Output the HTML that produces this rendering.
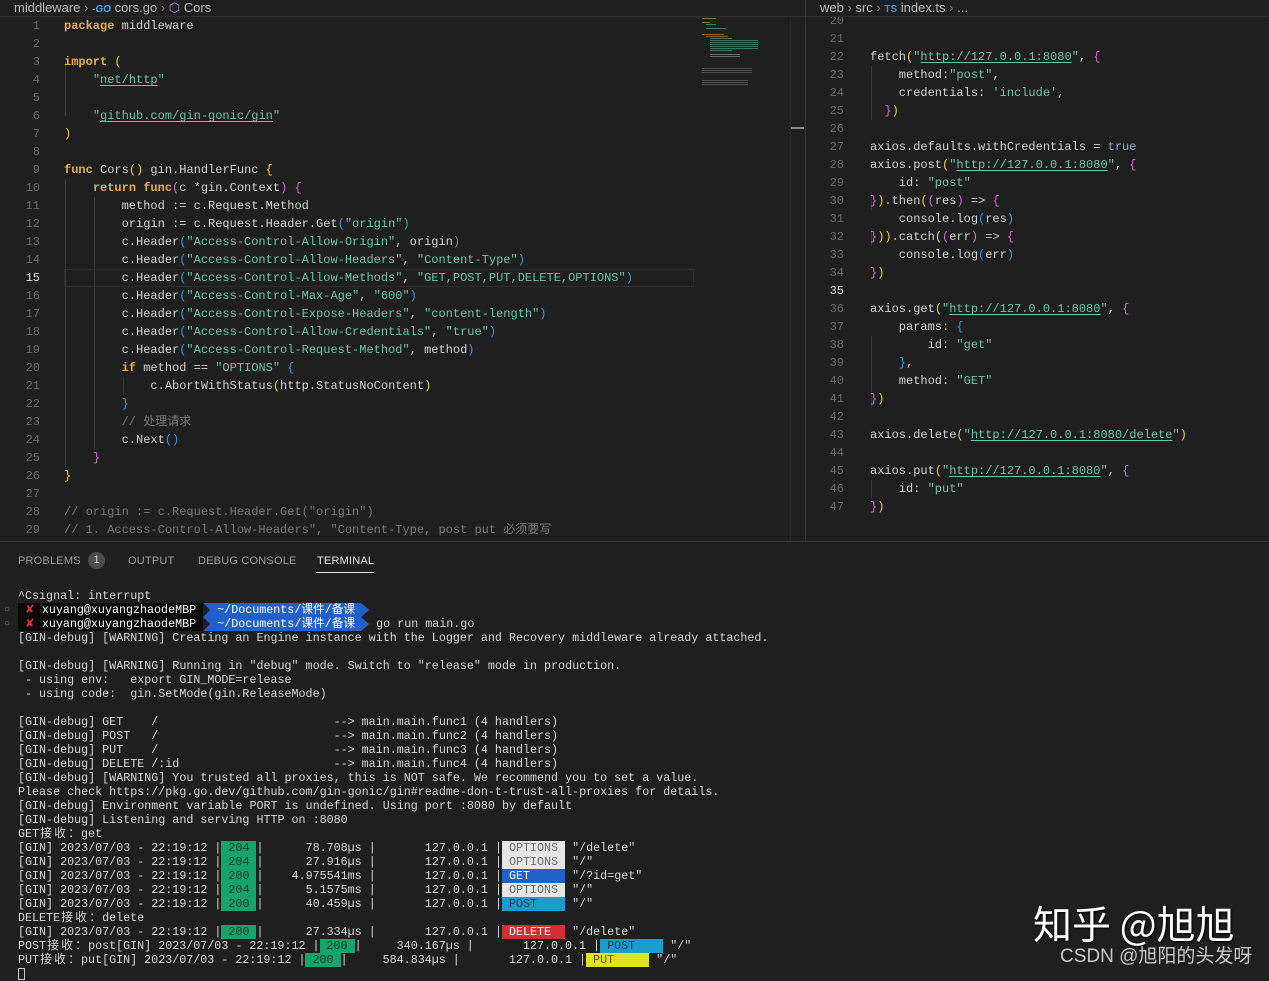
<!DOCTYPE html>
<html><head><meta charset="utf-8">
<style>
*{margin:0;padding:0;box-sizing:border-box}
body{width:1269px;height:977px;background:#1f1f1f;overflow:hidden;position:relative;font-family:"Liberation Mono","Noto Sans CJK SC",monospace;color:#d4d4d4}
.bc{position:absolute;top:0;height:15px;font:13px "Liberation Sans","Noto Sans CJK SC",sans-serif;color:#bbb;line-height:15px;white-space:nowrap}
.ln{position:absolute;font-size:12px;line-height:18px;height:18px;white-space:pre;text-align:right;color:#6b6b6b;width:40px}
.cl{position:absolute;font-size:12px;line-height:18px;height:18px;white-space:pre}
.k{color:#e8ab4c;font-weight:bold}
.s{color:#6cc5a8}
.u{text-decoration:underline;text-underline-offset:2px}
.y{color:#f2d03a}.p{color:#d070d0}.b{color:#3a9ad9}
.c{color:#7a7a7a}.t{color:#a0a0e0}
.g{position:absolute;width:1px;background:#3a3a3a}
#term{position:absolute;left:18px;top:589px;font-size:11.7px;line-height:14px;white-space:pre;color:#d8d8d8}
.w{display:inline-block;width:14px;text-align:center}
.s2{background:#17a36c;color:#0a3a25}
.op{background:#e6e6e6;color:#6a6a6a}
.ge{background:#2160c8;color:#fff}
.po{background:#1a9ccc;color:#0c3c55}
.de{background:#d22f35;color:#fff}
.pu{background:#e2e21e;color:#555}
.pk{background:#0a0a0a;color:#fff}
.pr{background:#2160c8;color:#fff;display:inline-block;clip-path:polygon(0 0,calc(100% - 8px) 0,100% 50%,calc(100% - 8px) 100%,0 100%,7px 50%)}
.tab{position:absolute;top:555px;font:11px "Liberation Sans",sans-serif;color:#9d9d9d;letter-spacing:.2px}
</style></head><body>

<!-- breadcrumbs -->
<div class="bc" style="left:14px">middleware <span style="color:#888">›</span> <span style="color:#5aa0d8;font-size:10px;font-style:italic;font-weight:bold">-GO</span> cors.go <span style="color:#888">›</span> <span style="color:#b180d7">⬡</span> Cors</div>
<div class="bc" style="left:820px">web <span style="color:#888">›</span> src <span style="color:#888">›</span> <span style="color:#3a8fd8;font-size:10px;font-weight:bold">TS</span> index.ts <span style="color:#888">›</span> ...</div>
<div style="position:absolute;left:0;top:16px;width:1269px;height:1px;background:#2c2c2c"></div>
<div style="position:absolute;left:805px;top:0;width:1px;height:541px;background:#333"></div>
<div style="position:absolute;left:0;top:541px;width:1269px;height:1px;background:#3a3a3a"></div>
<div style="position:absolute;left:790px;top:127px;width:14px;height:2px;background:#888"></div>
<div style="position:absolute;left:790px;top:16px;width:1px;height:525px;background:#2a2a2a"></div>

<!-- minimap -->
<div style="position:absolute;left:702px;top:18px;width:70px;height:80px;opacity:.55">
<div style="position:absolute;top:0;left:0;width:14px;height:1px;background:#e8ab4c"></div>
<div style="position:absolute;top:4px;left:0;width:8px;height:1px;background:#e8ab4c"></div>
<div style="position:absolute;top:6px;left:4px;width:10px;height:1px;background:#6cc5a8"></div>
<div style="position:absolute;top:10px;left:4px;width:20px;height:1px;background:#6cc5a8"></div>
<div style="position:absolute;top:16px;left:0;width:22px;height:1px;background:#e8ab4c"></div>
<div style="position:absolute;top:18px;left:4px;width:22px;height:1px;background:#d4a050"></div>
<div style="position:absolute;top:20px;left:8px;width:22px;height:14px;background:repeating-linear-gradient(#5fb89a 0 1px,transparent 1px 2px)"></div>
<div style="position:absolute;top:22px;left:20px;width:36px;height:10px;background:repeating-linear-gradient(#5fb89a 0 1px,transparent 1px 2px)"></div>
<div style="position:absolute;top:36px;left:8px;width:30px;height:4px;background:repeating-linear-gradient(#aaa 0 1px,transparent 1px 2px)"></div>
<div style="position:absolute;top:50px;left:0;width:50px;height:6px;background:repeating-linear-gradient(#777 0 1px,transparent 1px 2px)"></div>
<div style="position:absolute;top:62px;left:0;width:46px;height:6px;background:repeating-linear-gradient(#777 0 1px,transparent 1px 2px)"></div>
</div>

<!-- left editor -->
<div class="g" style="left:65px;top:62px;height:54px"></div>
<div class="g" style="left:65px;top:179px;height:288px"></div>
<div class="g" style="left:94px;top:197px;height:252px"></div>
<div class="g" style="left:123px;top:377px;height:18px"></div>
<div style="position:absolute;left:64px;top:269px;width:630px;height:18px;border:1px solid #2e2e2e"></div>

<div class="ln" style="left:0;top:17px">1</div><div class="cl" style="left:64px;top:17px"><span class="k">package</span> middleware</div>
<div class="ln" style="left:0;top:35px">2</div>
<div class="ln" style="left:0;top:53px">3</div><div class="cl" style="left:64px;top:53px"><span class="k">import</span> <span class="y">(</span></div>
<div class="ln" style="left:0;top:71px">4</div><div class="cl" style="left:64px;top:71px">    <span class="s">"<span class="u">net/http</span>"</span></div>
<div class="ln" style="left:0;top:89px">5</div>
<div class="ln" style="left:0;top:107px">6</div><div class="cl" style="left:64px;top:107px">    <span class="s">"<span class="u">github.com/gin-gonic/gin</span>"</span></div>
<div class="ln" style="left:0;top:125px">7</div><div class="cl" style="left:64px;top:125px"><span class="y">)</span></div>
<div class="ln" style="left:0;top:143px">8</div>
<div class="ln" style="left:0;top:161px">9</div><div class="cl" style="left:64px;top:161px"><span class="k">func</span> Cors<span class="y">()</span> gin.HandlerFunc <span class="y">{</span></div>
<div class="ln" style="left:0;top:179px">10</div><div class="cl" style="left:64px;top:179px">    <span class="k">return</span> <span class="k">func</span><span class="p">(</span>c *gin.Context<span class="p">)</span> <span class="p">{</span></div>
<div class="ln" style="left:0;top:197px">11</div><div class="cl" style="left:64px;top:197px">        method := c.Request.Method</div>
<div class="ln" style="left:0;top:215px">12</div><div class="cl" style="left:64px;top:215px">        origin := c.Request.Header.Get<span class="b">(</span><span class="s">"origin"</span><span class="b">)</span></div>
<div class="ln" style="left:0;top:233px">13</div><div class="cl" style="left:64px;top:233px">        c.Header<span class="b">(</span><span class="s">"Access-Control-Allow-Origin"</span>, origin<span class="b">)</span></div>
<div class="ln" style="left:0;top:251px">14</div><div class="cl" style="left:64px;top:251px">        c.Header<span class="b">(</span><span class="s">"Access-Control-Allow-Headers"</span>, <span class="s">"Content-Type"</span><span class="b">)</span></div>
<div class="ln" style="left:0;top:269px;color:#e0e0e0">15</div><div class="cl" style="left:64px;top:269px">        c.Header<span class="b">(</span><span class="s">"Access-Control-Allow-Methods"</span>, <span class="s">"GET,POST,PUT,DELETE,OPTIONS"</span><span class="b">)</span></div>
<div class="ln" style="left:0;top:287px">16</div><div class="cl" style="left:64px;top:287px">        c.Header<span class="b">(</span><span class="s">"Access-Control-Max-Age"</span>, <span class="s">"600"</span><span class="b">)</span></div>
<div class="ln" style="left:0;top:305px">17</div><div class="cl" style="left:64px;top:305px">        c.Header<span class="b">(</span><span class="s">"Access-Control-Expose-Headers"</span>, <span class="s">"content-length"</span><span class="b">)</span></div>
<div class="ln" style="left:0;top:323px">18</div><div class="cl" style="left:64px;top:323px">        c.Header<span class="b">(</span><span class="s">"Access-Control-Allow-Credentials"</span>, <span class="s">"true"</span><span class="b">)</span></div>
<div class="ln" style="left:0;top:341px">19</div><div class="cl" style="left:64px;top:341px">        c.Header<span class="b">(</span><span class="s">"Access-Control-Request-Method"</span>, method<span class="b">)</span></div>
<div class="ln" style="left:0;top:359px">20</div><div class="cl" style="left:64px;top:359px">        <span class="k">if</span> method == <span class="s">"OPTIONS"</span> <span class="b">{</span></div>
<div class="ln" style="left:0;top:377px">21</div><div class="cl" style="left:64px;top:377px">            c.AbortWithStatus<span class="y">(</span>http.StatusNoContent<span class="y">)</span></div>
<div class="ln" style="left:0;top:395px">22</div><div class="cl" style="left:64px;top:395px">        <span class="b">}</span></div>
<div class="ln" style="left:0;top:413px">23</div><div class="cl" style="left:64px;top:413px">        <span class="c">// 处理请求</span></div>
<div class="ln" style="left:0;top:431px">24</div><div class="cl" style="left:64px;top:431px">        c.Next<span class="b">()</span></div>
<div class="ln" style="left:0;top:449px">25</div><div class="cl" style="left:64px;top:449px">    <span class="p">}</span></div>
<div class="ln" style="left:0;top:467px">26</div><div class="cl" style="left:64px;top:467px"><span class="y">}</span></div>
<div class="ln" style="left:0;top:485px">27</div>
<div class="ln" style="left:0;top:503px">28</div><div class="cl c" style="left:64px;top:503px">// origin := c.Request.Header.Get("origin")</div>
<div class="ln" style="left:0;top:521px">29</div><div class="cl c" style="left:64px;top:521px">// 1. Access-Control-Allow-Headers", "Content-Type, post put 必须要写</div>

<!-- right editor -->
<div style="position:absolute;left:806px;top:17px;width:463px;height:524px;overflow:hidden">
<div class="g" style="left:65px;top:49px;height:54px"></div>
<div class="g" style="left:65px;top:175px;height:18px"></div>
<div class="g" style="left:65px;top:211px;height:18px"></div>
<div class="g" style="left:65px;top:319px;height:72px"></div>
<div class="g" style="left:65px;top:463px;height:18px"></div>
<div class="ln" style="left:-2px;top:-5px">20</div>
<div class="ln" style="left:-2px;top:13px">21</div>
<div class="ln" style="left:-2px;top:31px">22</div><div class="cl" style="left:64px;top:31px">fetch<span class="y">(</span><span class="s">"<span class="u">http://127.0.0.1:8080</span>"</span>, <span class="p">{</span></div>
<div class="ln" style="left:-2px;top:49px">23</div><div class="cl" style="left:64px;top:49px">    method:<span class="s">"post"</span>,</div>
<div class="ln" style="left:-2px;top:67px">24</div><div class="cl" style="left:64px;top:67px">    credentials: <span class="s">'include'</span>,</div>
<div class="ln" style="left:-2px;top:85px">25</div><div class="cl" style="left:64px;top:85px">  <span class="p">}</span><span class="y">)</span></div>
<div class="ln" style="left:-2px;top:103px">26</div>
<div class="ln" style="left:-2px;top:121px">27</div><div class="cl" style="left:64px;top:121px">axios.defaults.withCredentials = <span class="t">true</span></div>
<div class="ln" style="left:-2px;top:139px">28</div><div class="cl" style="left:64px;top:139px">axios.post<span class="y">(</span><span class="s">"<span class="u">http://127.0.0.1:8080</span>"</span>, <span class="p">{</span></div>
<div class="ln" style="left:-2px;top:157px">29</div><div class="cl" style="left:64px;top:157px">    id: <span class="s">"post"</span></div>
<div class="ln" style="left:-2px;top:175px">30</div><div class="cl" style="left:64px;top:175px"><span class="p">}</span><span class="y">)</span>.then<span class="y">(</span><span class="p">(</span>res<span class="p">)</span> =&gt; <span class="p">{</span></div>
<div class="ln" style="left:-2px;top:193px">31</div><div class="cl" style="left:64px;top:193px">    console.log<span class="b">(</span>res<span class="b">)</span></div>
<div class="ln" style="left:-2px;top:211px">32</div><div class="cl" style="left:64px;top:211px"><span class="p">}</span><span class="y">))</span>.catch<span class="y">(</span><span class="p">(</span>err<span class="p">)</span> =&gt; <span class="p">{</span></div>
<div class="ln" style="left:-2px;top:229px">33</div><div class="cl" style="left:64px;top:229px">    console.log<span class="b">(</span>err<span class="b">)</span></div>
<div class="ln" style="left:-2px;top:247px">34</div><div class="cl" style="left:64px;top:247px"><span class="p">}</span><span class="y">)</span></div>
<div class="ln" style="left:-2px;top:265px;color:#e0e0e0">35</div>
<div class="ln" style="left:-2px;top:283px">36</div><div class="cl" style="left:64px;top:283px">axios.get<span class="y">(</span><span class="s">"<span class="u">http://127.0.0.1:8080</span>"</span>, <span class="p">{</span></div>
<div class="ln" style="left:-2px;top:301px">37</div><div class="cl" style="left:64px;top:301px">    params: <span class="b">{</span></div>
<div class="ln" style="left:-2px;top:319px">38</div><div class="cl" style="left:64px;top:319px">        id: <span class="s">"get"</span></div>
<div class="ln" style="left:-2px;top:337px">39</div><div class="cl" style="left:64px;top:337px">    <span class="b">}</span>,</div>
<div class="ln" style="left:-2px;top:355px">40</div><div class="cl" style="left:64px;top:355px">    method: <span class="s">"GET"</span></div>
<div class="ln" style="left:-2px;top:373px">41</div><div class="cl" style="left:64px;top:373px"><span class="p">}</span><span class="y">)</span></div>
<div class="ln" style="left:-2px;top:391px">42</div>
<div class="ln" style="left:-2px;top:409px">43</div><div class="cl" style="left:64px;top:409px">axios.delete<span class="y">(</span><span class="s">"<span class="u">http://127.0.0.1:8080/delete</span>"</span><span class="y">)</span></div>
<div class="ln" style="left:-2px;top:427px">44</div>
<div class="ln" style="left:-2px;top:445px">45</div><div class="cl" style="left:64px;top:445px">axios.put<span class="y">(</span><span class="s">"<span class="u">http://127.0.0.1:8080</span>"</span>, <span class="p">{</span></div>
<div class="ln" style="left:-2px;top:463px">46</div><div class="cl" style="left:64px;top:463px">    id: <span class="s">"put"</span></div>
<div class="ln" style="left:-2px;top:481px">47</div><div class="cl" style="left:64px;top:481px"><span class="p">}</span><span class="y">)</span></div>
</div>

<!-- panel tabs -->
<div class="tab" style="left:18px">PROBLEMS</div>
<div style="position:absolute;left:88px;top:552px;width:17px;height:17px;border-radius:50%;background:#4d4d4d;color:#ddd;font:11px 'Liberation Sans',sans-serif;text-align:center;line-height:17px">1</div>
<div class="tab" style="left:128px">OUTPUT</div>
<div class="tab" style="left:198px">DEBUG CONSOLE</div>
<div class="tab" style="left:317px;color:#e7e7e7">TERMINAL</div>
<div style="position:absolute;left:316px;top:572px;width:58px;height:1px;background:#e7e7e7"></div>

<div style="position:absolute;left:4px;top:604px;font-size:10px;color:#888;line-height:14px">○<br>○</div>

<div id="term">^Csignal: interrupt
<span class="pk"> <span style="color:#e03030">✘</span> xuyang@xuyangzhaodeMBP </span><span class="pr">  ~/Documents/课件/备课  </span>
<span class="pk"> <span style="color:#e03030">✘</span> xuyang@xuyangzhaodeMBP </span><span class="pr">  ~/Documents/课件/备课  </span> go run main.go
[GIN-debug] [WARNING] Creating an Engine instance with the Logger and Recovery middleware already attached.

[GIN-debug] [WARNING] Running in "debug" mode. Switch to "release" mode in production.
 - using env:   export GIN_MODE=release
 - using code:  gin.SetMode(gin.ReleaseMode)

[GIN-debug] GET    /                         --&gt; main.main.func1 (4 handlers)
[GIN-debug] POST   /                         --&gt; main.main.func2 (4 handlers)
[GIN-debug] PUT    /                         --&gt; main.main.func3 (4 handlers)
[GIN-debug] DELETE /:id                      --&gt; main.main.func4 (4 handlers)
[GIN-debug] [WARNING] You trusted all proxies, this is NOT safe. We recommend you to set a value.
Please check https://pkg.go.dev/github.com/gin-gonic/gin#readme-don-t-trust-all-proxies for details.
[GIN-debug] Environment variable PORT is undefined. Using port :8080 by default
[GIN-debug] Listening and serving HTTP on :8080
GET<span class="w">接</span><span class="w">收</span><span class="w">：</span>get
[GIN] 2023/07/03 - 22:19:12 |<span class="s2"> 204 </span>|      78.708µs |       127.0.0.1 |<span class="op"> OPTIONS </span> "/delete"
[GIN] 2023/07/03 - 22:19:12 |<span class="s2"> 204 </span>|      27.916µs |       127.0.0.1 |<span class="op"> OPTIONS </span> "/"
[GIN] 2023/07/03 - 22:19:12 |<span class="s2"> 200 </span>|    4.975541ms |       127.0.0.1 |<span class="ge"> GET     </span> "/?id=get"
[GIN] 2023/07/03 - 22:19:12 |<span class="s2"> 204 </span>|      5.1575ms |       127.0.0.1 |<span class="op"> OPTIONS </span> "/"
[GIN] 2023/07/03 - 22:19:12 |<span class="s2"> 200 </span>|      40.459µs |       127.0.0.1 |<span class="po"> POST    </span> "/"
DELETE<span class="w">接</span><span class="w">收</span><span class="w">：</span>delete
[GIN] 2023/07/03 - 22:19:12 |<span class="s2"> 200 </span>|      27.334µs |       127.0.0.1 |<span class="de"> DELETE  </span> "/delete"
POST<span class="w">接</span><span class="w">收</span><span class="w">：</span>post[GIN] 2023/07/03 - 22:19:12 |<span class="s2"> 200 </span>|     340.167µs |       127.0.0.1 |<span class="po"> POST    </span> "/"
PUT<span class="w">接</span><span class="w">收</span><span class="w">：</span>put[GIN] 2023/07/03 - 22:19:12 |<span class="s2"> 200 </span>|     584.834µs |       127.0.0.1 |<span class="pu"> PUT     </span> "/"
<span style="display:inline-block;width:7px;height:12px;border:1px solid #ccc;vertical-align:middle"></span></div>

<!-- watermark -->
<div style="position:absolute;left:1033px;top:898px;font:39px 'Noto Sans CJK SC',sans-serif;color:#fff;line-height:50px;text-shadow:1px 1px 2px #000;white-space:nowrap">知乎 @旭旭</div>
<div style="position:absolute;left:1060px;top:944px;font:19px 'Liberation Sans','Noto Sans CJK SC',sans-serif;color:#c8c8c8;line-height:26px;white-space:nowrap">CSDN @旭阳的头发呀</div>
</body></html>
